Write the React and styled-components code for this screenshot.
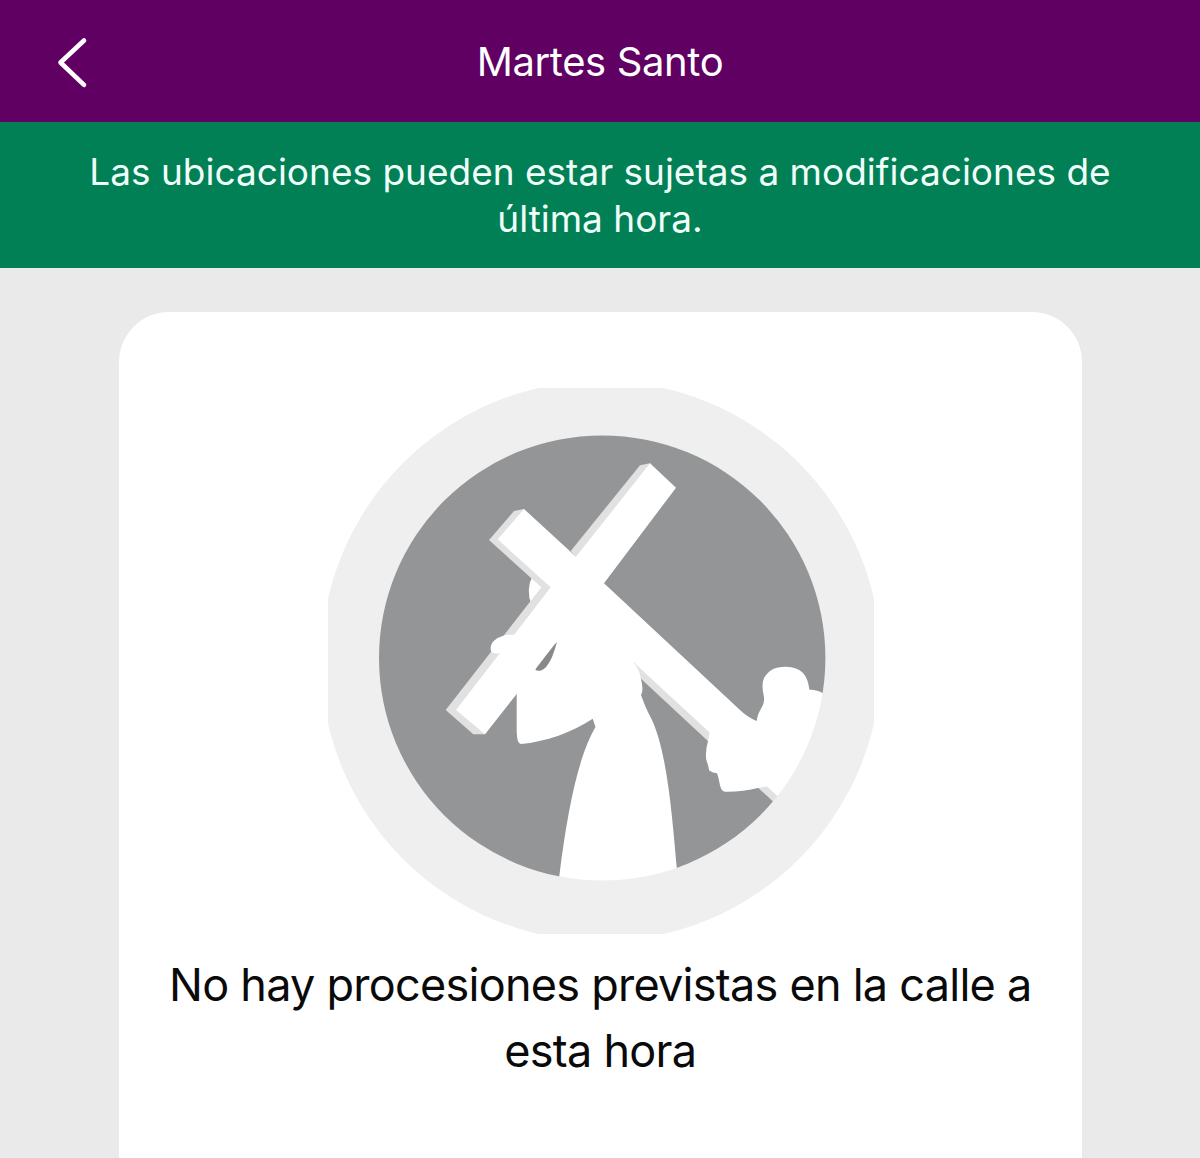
import React from 'react';
import styled, { createGlobalStyle } from 'styled-components';

const GlobalStyle = createGlobalStyle`
  * {
    box-sizing: border-box;
  }
  body {
    margin: 0;
    background: #eaeaea;
    font-family: Inter, 'Liberation Sans', sans-serif;
  }
`;

const Screen = styled.div`
  display: flex;
  flex-direction: column;
  height: 1158px;
  overflow: hidden;
  background: #eaeaea;
`;

const Header = styled.header`
  display: grid;
  grid-template-columns: 120px 1fr 120px;
  align-items: center;
  flex: none;
  height: 122px;
  background: #5f0062;
  color: #fff;
`;

const BackButton = styled.button`
  display: flex;
  margin: 3px 0 0 54px;
  padding: 0;
  border: 0;
  background: none;
  color: inherit;
`;

const Title = styled.h1`
  margin: 2px 0 0;
  text-align: center;
  font-size: 40px;
  line-height: 48px;
  font-weight: 400;
  letter-spacing: -0.38px;
`;

const Notice = styled.p`
  flex: none;
  height: 146px;
  margin: 0;
  padding: 27px 80px 0;
  background: #008054;
  color: #f0fffa;
  text-align: center;
  font-size: 37px;
  line-height: 46.5px;
`;

const Card = styled.main`
  display: flex;
  flex-direction: column;
  align-items: center;
  flex: 1;
  margin: 44px 118.5px 0 119px;
  padding-top: 76px;
  border-radius: 50px 50px 0 0;
  background: #fff;

  svg {
    margin-left: 1.5px;
  }
`;

const Message = styled.p`
  margin: 18px 0 0;
  padding: 0 40px;
  text-align: center;
  color: #0a0a0a;
  font-size: 45px;
  line-height: 65.5px;
  letter-spacing: -0.74px;
`;

function BackIcon() {
  return (
    <svg width="36" height="52" viewBox="54 37 36 52" fill="none">
      <path
        d="M84 40.5L60.5 62.5L84 84.8"
        stroke="currentColor"
        strokeWidth="4.6"
        strokeLinecap="round"
        strokeLinejoin="round"
      />
    </svg>
  );
}

function Emblem() {
  return (
    <svg width="546" height="546" viewBox="328 388 546 546">
      <defs>
        <clipPath id="disc">
          <circle cx="602" cy="658" r="235" />
        </clipPath>
      </defs>
      <g clipPath="url(#disc)">
        <circle cx="602" cy="658" r="235" fill="#939597" />
        {/* head behind the cross */}
        <path d="M533 575Q525 590 532 606L546 590Z" fill="#fff" />
        {/* shaded side of the beams */}
        <g fill="#e1e1e2">
          <path d="M650 463.3L640 465.3L570.7 551L577 558L655 470Z" />
          <path d="M524 509L514 511L489 540L541.3 587.3L445.7 710L473.3 734.3L485 734.3L560 600Z" />
          <path d="M634 662.7L640.7 678.5L795 822L805 806L700 715Z" />
        </g>
        {/* cross */}
        <path
          d="M650 463.3L676 487.7L604 583.3L740 710Q747 717 756.7 721L840 790L798 814L634 662.7L585 600L516.7 694L485 734.3L456 710L550.7 587.3L497.7 539.3L524 509L576 556.7Z"
          fill="#fff"
        />
        {/* hand on the beam */}
        <path d="M516 634.5L506 635C495 638 489 643 491 651Q492 654 499 653.3L520 650Z" fill="#fff" />
        {/* robe and sleeve */}
        <path
          d="M590 580L560 620L516.7 690V732Q517 744 521 744C545 742 573 732 592.7 718.7L595.5 727C579 755 568 806 559.3 876L557 898H680L676.7 867.3C672 815 667 748 650 716Q646 709 641 695Q644 690 640.7 678Q640 671 634 662.7L640 620Z"
          fill="#fff"
        />
        {/* helper holding the foot of the cross */}
        <path
          d="M756.7 721C758 709 765 707 764 697Q761 685 764 678C769 670 774 667 786 666.7C801 667 808 675 809.3 689.5Q818 690 823 693.3L840 694V802L785 803L767 786.5L759 787.7Q742 792 725 791.7C719 791 720 780 717 773.3L713 772.5L709.2 770.5Q708 764 706.3 760Q705 752 708 741L710 731Z"
          fill="#fff"
        />
        <path d="M557 641.7C553 657 548 668 541 670.5Q537 671.5 535.3 669.5C541 662 549 651 557 641.7Z" fill="#87898b" />
      </g>
      {/* outer ring */}
      <path
        fillRule="evenodd"
        fill="#efefef"
        d="M321 661a280 280 0 1 0 560 0a280 280 0 1 0 -560 0ZM379 658a223.2 222.6 0 1 0 446.4 0a223.2 222.6 0 1 0 -446.4 0Z"
      />
    </svg>
  );
}

function App() {
  return (
    <Screen>
      <GlobalStyle />
      <Header>
        <BackButton type="button" aria-label="Volver">
          <BackIcon />
        </BackButton>
        <Title>Martes Santo</Title>
      </Header>
      <Notice>Las ubicaciones pueden estar sujetas a modificaciones de última hora.</Notice>
      <Card>
        <Emblem />
        <Message>No hay procesiones previstas en la calle a esta hora</Message>
      </Card>
    </Screen>
  );
}

export default App;
